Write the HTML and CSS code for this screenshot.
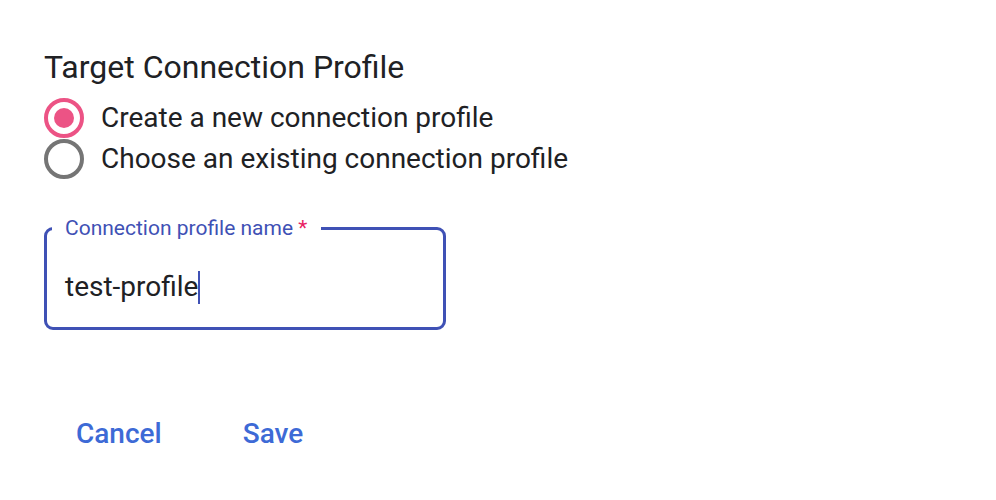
FILE: index.html
```html
<!DOCTYPE html>
<html>
<head>
<meta charset="utf-8">
<link rel="stylesheet" href="styles.css">
</head>
<body>
<div class="page">
  <h2 class="title">Target Connection Profile</h2>
  <div class="radio-group">
    <label class="radio checked"><span class="circle"><span class="dot"></span></span><span class="radio-label">Create a new connection profile</span></label>
    <label class="radio"><span class="circle"></span><span class="radio-label">Choose an existing connection profile</span></label>
  </div>
  <div class="field">
    <span class="field-label">Connection profile name<span class="req"> *</span></span>
    <div class="field-value">test-profile<span class="caret"></span></div>
  </div>
  <div class="actions">
    <button class="btn">Cancel</button>
    <button class="btn">Save</button>
  </div>
</div>
</body>
</html>
```
FILE: styles.css
```css
html, body {
  margin: 0;
  padding: 0;
  background: #ffffff;
}
body {
  font-family: Roboto, "Liberation Sans", sans-serif;
  color: #202124;
}
.page {
  padding: 47px 0 0 44px;
  display: flex;
  flex-direction: column;
  align-items: flex-start;
}
.title {
  margin: 0;
  font-size: 32px;
  font-weight: 400;
  line-height: 40px;
  color: #202124;
}
.radio-group {
  display: flex;
  flex-direction: column;
  margin-top: 10px;
}
.radio {
  display: flex;
  align-items: center;
  height: 41px;
  gap: 17px;
}
.circle {
  width: 40px;
  height: 40px;
  box-sizing: border-box;
  border: 4px solid #757575;
  border-radius: 50%;
  display: flex;
  align-items: center;
  justify-content: center;
}
.radio.checked .circle {
  border-color: #ec5385;
}
.dot {
  width: 20px;
  height: 20px;
  border-radius: 50%;
  background: #ec5385;
}
.radio-label {
  font-size: 28px;
  line-height: 36px;
  color: #202124;
}
.field {
  position: relative;
  margin-top: 48px;
  width: 402px;
  height: 103px;
  box-sizing: border-box;
  border: 3.5px solid #3f51b5;
  border-radius: 9px;
  padding: 39px 0 0 18px;
}
.field-label {
  position: absolute;
  left: 5px;
  top: -14px;
  padding: 0 14px 0 13px;
  background: #ffffff;
  font-size: 21px;
  line-height: 24px;
  color: #3f51b5;
  white-space: nowrap;
}
.req {
  color: #e91e63;
}
.field-value {
  font-size: 28px;
  line-height: 36px;
  display: flex;
  align-items: center;
  color: #202124;
}
.caret {
  display: inline-block;
  width: 2px;
  height: 33px;
  background: #3f51b5;
}
.actions {
  display: flex;
  margin-top: 72px;
  margin-left: 4px;
  gap: 25px;
}
.btn {
  font-family: Roboto, "Liberation Sans", sans-serif;
  font-size: 28px;
  font-weight: 500;
  color: #3d6ad6;
  background: none;
  border: none;
  padding: 0 28px;
  height: 63px;
  min-width: 112px;
}
```
